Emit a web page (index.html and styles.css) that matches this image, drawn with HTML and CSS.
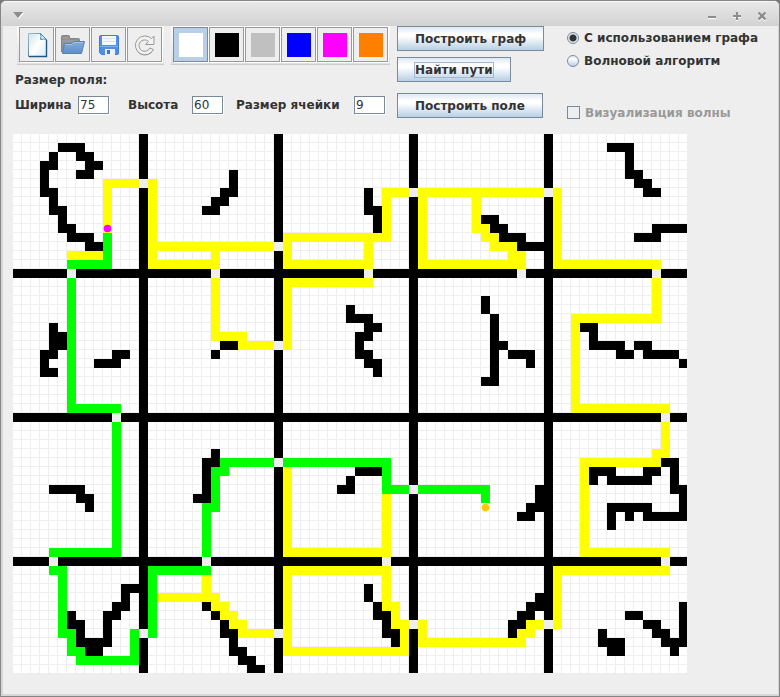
FILE: index.html
```html
<!DOCTYPE html>
<html lang="ru">
<head>
<meta charset="utf-8">
<title>Поиск путей</title>
<link rel="stylesheet" href="styles.css">
</head>
<body>
<div class="window">
  <header class="titlebar">
    <button class="title-button" aria-label="Меню окна"><svg width="12" height="12" viewBox="0 0 12 12"><path d="M2 3h10L7 9z" fill="#fff"/><path d="M1 2h10L6 8z" fill="#8c8c8c"/></svg></button>
    <div class="window-controls">
      <button class="title-button" aria-label="Свернуть"><svg width="12" height="12" viewBox="0 0 12 12"><path d="M2 7h8v2H2z" fill="#fff"/><path d="M2 6h8v2H2z" fill="#8c8c8c"/></svg></button>
      <button class="title-button" aria-label="Развернуть"><svg width="12" height="12" viewBox="0 0 12 12"><path d="M5 2h2v3h3v2H7v3H5V7H2V5h3z" fill="#fff" transform="translate(0 1)"/><path d="M5 2h2v3h3v2H7v3H5V7H2V5h3z" fill="#8c8c8c"/></svg></button>
      <button class="title-button" aria-label="Закрыть"><svg width="12" height="12" viewBox="0 0 12 12" fill="none" stroke-width="2.400"><path d="M2.500 3.500l7 7M9.500 3.500l-7 7" stroke="#fff"/><path d="M2.500 2.500l7 7M9.500 2.500l-7 7" stroke="#8c8c8c"/></svg></button>
    </div>
  </header>

  <main class="content">
    <div class="controls">
      <div class="left">
        <div class="toolbars">
          <div class="toolbar">
            <button class="tool" aria-label="Новый">
              <svg width="24" height="28" viewBox="0 0 24 28"><defs><linearGradient id="page" x1="0" y1="0" x2="1" y2="1"><stop offset="0" stop-color="#cfe3ee"/><stop offset=".5" stop-color="#fff"/><stop offset="1" stop-color="#d8ebf5"/></linearGradient><linearGradient id="edge" x1="0" y1="0" x2="1" y2="1"><stop offset="0" stop-color="#9dbdcc"/><stop offset="1" stop-color="#0f4f7c"/></linearGradient></defs><path d="M3.500 2.500h12l6 6v17h-18z" fill="url(#page)" stroke="url(#edge)"/><path d="M15.500 2.500q1 3 0 6 3-1 6 0z" fill="#d7edf8" stroke="#4b87a8"/><path d="M21.500 9v16.500H4" fill="none" stroke="#1c5a84" stroke-width="1.400"/></svg>
            </button>
            <button class="tool" aria-label="Открыть">
              <svg width="28" height="28" viewBox="0 0 28 28"><defs><linearGradient id="folder" x1="0" y1="0" x2="0" y2="1"><stop offset="0" stop-color="#84aedb"/><stop offset="1" stop-color="#5f8dc4"/></linearGradient></defs><path d="M2.500 21V5.500q0-1 1-1h6q1 0 1 1v2h9q1 0 1 1v12.500z" fill="#8f9091" stroke="#858585"/><path d="M3.500 7h6M3.500 10h16" stroke="#a6a6a6"/><path d="M3.500 22.500l2-10h7l2-2h11l-3 12z" fill="url(#folder)" stroke="#5682b8"/><path d="M6 13.500h7l2-2h9" fill="none" stroke="#a3c4e6"/></svg>
            </button>
            <button class="tool" aria-label="Сохранить">
              <svg width="28" height="28" viewBox="0 0 28 28"><path d="M6 4.500h16q1.500 0 1.500 1.500v16q0 1.500-1.500 1.500H6.500l-2-2V6q0-1.500 1.500-1.500z" fill="#4d8fea" stroke="#3f7dd8"/><path d="M7 5h14v9H7z" fill="#f5f8fc"/><path d="M8 7.500h12M8 10.500h12" stroke="#dce4ee"/><path d="M5 15.500h18" stroke="#7db0f5"/><path d="M10 18h10v6H10z" fill="#eef2f6"/><path d="M12 19h3v4h-3z" fill="#3976d2"/></svg>
            </button>
            <button class="tool" aria-label="Обновить">
              <svg width="28" height="28" viewBox="0 0 28 28"><path d="M23 5l-2.600 2.500A9.500 9.500 0 1 0 22.500 18.500l-3.700-1.500a5.700 5.700 0 1 1-1.300-6.600L14.500 13.500H23z" fill="#f2f2f2" stroke="#999" stroke-linejoin="round"/><path d="M7 21q6 6 14 0" fill="none" stroke="#777" stroke-opacity=".35"/></svg>
            </button>
          </div>
          <div class="toolbar">
            <button class="tool selected" aria-label="Белый"><span class="swatch white"></span></button>
            <button class="tool" aria-label="Чёрный"><span class="swatch black"></span></button>
            <button class="tool" aria-label="Серый"><span class="swatch gray"></span></button>
            <button class="tool" aria-label="Синий"><span class="swatch blue"></span></button>
            <button class="tool" aria-label="Пурпурный"><span class="swatch magenta"></span></button>
            <button class="tool" aria-label="Оранжевый"><span class="swatch orange"></span></button>
          </div>
        </div>
        <div class="size-title">Размер поля:</div>
        <div class="size-row">
          <label for="w">Ширина</label><input id="w" class="number" type="text" value="75">
          <label for="h">Высота</label><input id="h" class="number" type="text" value="60">
          <label for="cell">Размер ячейки</label><input id="cell" class="number" type="text" value="9">
        </div>
      </div>
      <div class="actions">
        <button class="action">Построить граф</button>
        <button class="action"><span class="focused">Найти пути</span></button>
        <button class="action build">Построить поле</button>
      </div>
      <div class="options">
        <label class="option"><input type="radio" name="method" checked>С использованием графа</label>
        <label class="option"><input type="radio" name="method">Волновой алгоритм</label>
        <label class="option wave"><input type="checkbox" disabled>Визуализация волны</label>
      </div>
    </div>

    <svg class="field" width="674" height="539" viewBox="0 0 674 539" role="img" aria-label="Поле">
      <defs><pattern id="grid" width="9" height="9" patternUnits="userSpaceOnUse"><rect width="9" height="9" fill="#eee"/><rect width="8" height="8" fill="#fff"/></pattern></defs>
      <rect width="674" height="539" fill="url(#grid)"/>
      <g class="cells" transform="scale(9) translate(.5 .5)">
        <!-- room walls -->
        <path class="wall" d="M14 0V59M29 0V59M44 0V59M59 0V59M0 15H74M0 31H74M0 47H74"/>
        <!-- doors -->
        <path class="door" d="M14 5h0M29 12h0M44 6h0M59 6h0M29 23h0M29 36h0M44 39h0M14 55h0M29 55h0M44 54h0M59 54h0M6 15h0M22 15h0M39 15h0M56 15h0M71 15h0M11 31h0M72 31h0M4 47h0M21 47h0M41 47h0M72 47h0"/>
        <!-- obstacles, first row of rooms -->
        <path class="wall" d="M5 1H7M4 2h0M7 2H8M3 3H4M8 3H9M7 4H8M3 3V6H4V8H5V10H6V11H8V12H9"/>
        <path class="wall" d="M24 4V6H23V7H22V8H21M39 6V8H40V10M52 9H53V10H54V11H56V12H58M66 1H68V4H69V5H70V6H71M69 11H71V10H74"/>
        <!-- second row -->
        <path class="wall" d="M4 21V24H3V26H4M5 22V23M9 25H11V24H12M23 23H24M22 24h0M37 19V20H39V21H40M39 21V22H38V24H39V25H40V26M52 18V19M53 20V27H52M53 23H54M55 24H57V25M63 21H64V23H67V24H68M69 23H70V24H73M74 25h0"/>
        <!-- third row -->
        <path class="wall" d="M4 39H7V40H8V41M22 35V36H21V40H20M38 37H40M37 38V39H36M58 39V41H57V42H56M72 36H73V39H74V42H70V41H66V43M68 42h0M64 38V37H66V38H70V37H71"/>
        <!-- fourth row -->
        <path class="wall" d="M13 50H12V52H11V53H10V56H7V54H6V53M8 57H9M21 52h0M22 53h0M23 54V55H24V57H25V58H26V59H27M39 50V51M40 52V53H41V55H42V56M58 51V52H57V53H56V54H55V55M65 55V56H67V57H66V56M68 53H69M70 54H71V55H72V56H74V52M73 57h0"/>
        <!-- graph edges -->
        <path class="edge" d="M13 5H10V10M9 13H6M15 5V14H22V12M15 12H28M30 11H41V6H43M30 11V14H39V11M45 6H58M45 6V14H56V13H55V12H53V11H52V10H51V6M60 6V14H71"/>
        <path class="edge" d="M22 16V22H25V23H28M30 23V16H39M71 16V20H62V30H72M72 32V35H71V36H63V46H72M30 37V46H41V40"/>
        <path class="edge" d="M21 49V51H16M21 51H22V52H23V53H24V54H25V55H28M30 48H41V52H42V54H43V57H30ZM45 54V56H56V55H57V54H58M60 54V48H72"/>
        <!-- found route -->
        <path class="route" d="M10 11V14H6M6 16V30H11M11 32V46H4M4 48H5V55H6V57H7V58H13V55M15 55V48H21M21 46V41H22V37H23V36H28M30 36H41V39H43M45 39H52V40"/>
      </g>
      <circle cx="94.500" cy="94.500" r="3.800" fill="#f0f"/>
      <circle cx="472.500" cy="373.500" r="3.800" fill="#ffc800"/>
    </svg>
  </main>
</div>
</body>
</html>
```
FILE: styles.css
```css
* { box-sizing: border-box; }

body {
  margin: 0;
  background: #777;
  color: #333;
  font: bold 12px/16px "DejaVu Sans", sans-serif;
}

button, input { font: inherit; color: inherit; margin: 0; }

.window {
  display: flex;
  flex-direction: column;
  min-height: 100vh;
  border: 1px solid #858585;
  border-radius: 6px 6px 0 0;
  background: #d6d6d6;
  overflow: hidden;
}

.titlebar {
  display: flex;
  justify-content: space-between;
  align-items: center;
  height: 25px;
  padding: 3px 11px 0;
  border-top: 1px solid #f8f8f8;
  background: linear-gradient(#e8e8e8, #d2d2d2);
}

.title-button {
  display: flex;
  padding: 0;
  border: 0;
  background: none;
}

.window-controls { display: flex; gap: 13px; }

.content {
  flex: 1;
  margin: 0 1px 2px 2px;
  padding: 0 10px 20px;
  background: #eee;
}

.controls {
  display: grid;
  grid-template-columns: 384px 170px 1fr;
  min-height: 108px;
}

.toolbars { display: flex; gap: 7px; padding-left: 4px; }

.toolbar {
  display: flex;
  gap: 1px;
  padding: 1px 2px 2px;
  border-bottom: 1px solid #ccc;
  background: linear-gradient(#fff, #e0e0e0);
}

.tool {
  display: flex;
  align-items: center;
  justify-content: center;
  width: 35px;
  height: 35px;
  padding: 0;
  border: 1px solid #999;
  background: #eee;
  box-shadow: 1px 1px #fff;
}

.tool.selected { background: #b8cfe5; border-color: #7a8a99; }

.swatch { width: 24px; height: 24px; }
.white { background: #fff; }
.black { background: #000; }
.gray { background: #c0c0c0; }
.blue { background: #00f; }
.magenta { background: #f0f; }
.orange { background: #ff8000; }

.size-title { padding: 7px 2px 0; }

.size-row {
  display: grid;
  grid-template-columns: 63px 50px 64px 44px 118px 31px;
  align-items: center;
  padding: 8px 2px 0;
}

.number {
  width: 31px;
  height: 18px;
  padding: 0 1px;
  border: 1px solid #7a8a99;
  background: #fff;
  box-shadow: 1px 1px #fff;
  font-weight: normal;
}

.actions {
  display: flex;
  flex-direction: column;
  align-items: flex-start;
  gap: 6px;
}

.action {
  height: 25px;
  padding: 0 17px;
  border: 1px solid #7a8a99;
  background: linear-gradient(#dde8f3, #fff 30%, #fff 40%, #b8cfe5);
}

.action.build { margin-top: 5px; }

.focused { outline: 1px solid #a3b8cc; }

.option {
  display: flex;
  align-items: center;
  gap: 5px;
  height: 23px;
}

.option input {
  appearance: none;
  width: 12px;
  height: 12px;
  border: 1px solid #7a8a99;
  background: linear-gradient(#dde8f3, #fff 30%, #b8cfe5);
}

.option input[type="radio"] { border-radius: 50%; }
.option input:checked { background: radial-gradient(circle, #333 0 3px, #dde8f3 4px); }
.option input[type="checkbox"] { width: 13px; height: 13px; background: #eee; }

.option.wave { margin-top: 29px; color: #999; }

.field { display: block; }
.cells { fill: none; stroke-linecap: square; stroke-linejoin: miter; shape-rendering: crispEdges; }
.wall { stroke: #000; }
.door { stroke: #eee; }
.edge { stroke: #ff0; }
.route { stroke: #0f0; }
```
